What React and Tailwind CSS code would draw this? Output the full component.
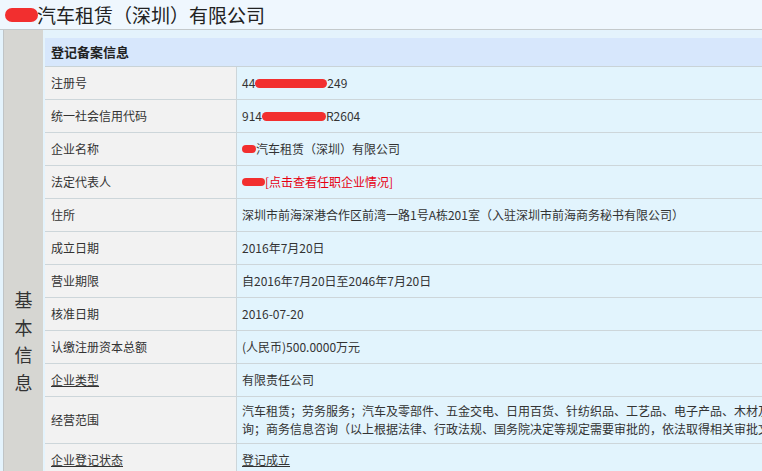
const ROWS = [
  { label: '注册号', value: 'reg' },
  { label: '统一社会信用代码', value: 'credit' },
  { label: '企业名称', value: 'name' },
  { label: '法定代表人', value: 'legal' },
  { label: '住所', value: '深圳市前海深港合作区前湾一路1号A栋201室（入驻深圳市前海商务秘书有限公司）' },
  { label: '成立日期', value: '2016年7月20日' },
  { label: '营业期限', value: '自2016年7月20日至2046年7月20日' },
  { label: '核准日期', value: '2016-07-20' },
  { label: '认缴注册资本总额', value: '(人民币)500.0000万元' },
  { label: '企业类型', value: '有限责任公司', link: true },
  { label: '经营范围', value: 'scope', tall: true },
  { label: '企业登记状态', value: '登记成立', link: true, valueLink: true },
];

const Blob = ({ w, h = 'h-[9px]', className = '' }) => (
  <span className={`inline-block align-middle rounded-full bg-[#f22f2f] ${h} ${className}`} style={{ width: w }} />
);

const Value = ({ row }) => {
  switch (row.value) {
    case 'reg':
      return (
        <span className="flex items-center">
          44<Blob w={72} />249
        </span>
      );
    case 'credit':
      return (
        <span className="flex items-center">
          914<Blob w={64} />R2604
        </span>
      );
    case 'name':
      return (
        <span className="flex items-center">
          <Blob w={14} h="h-[8px]" />汽车租赁（深圳）有限公司
        </span>
      );
    case 'legal':
      return (
        <span className="flex items-center">
          <Blob w={23} h="h-[8px]" />
          <span className="text-[#e60012]">[点击查看任职企业情况]</span>
        </span>
      );
    case 'scope':
      return (
        <span className="whitespace-nowrap leading-[18px]">
          汽车租赁；劳务服务；汽车及零部件、五金交电、日用百货、针纺织品、工艺品、电子产品、木材及制品的销售；经济信息咨
          <br />
          询；商务信息咨询（以上根据法律、行政法规、国务院决定等规定需要审批的，依法取得相关审批文件后方可经营）
        </span>
      );
    default:
      return <span className={row.valueLink ? 'underline' : ''}>{row.value}</span>;
  }
};

export default function App() {
  return (
    <div
      className="w-[762px] h-[471px] overflow-hidden bg-[#eff7fe] text-[#333]"
      style={{ fontFamily: '"Noto Sans CJK SC", "Noto Sans", sans-serif' }}
    >
      {/* company title */}
      <div className="h-[29px] pl-[5px] flex items-center text-[19px] text-[#222] leading-none">
        <Blob w={33} h="h-[14px]" className="-mr-[1px]" />
        汽车租赁（深圳）有限公司
      </div>

      <div className="flex border-t border-[#c4c9cb] bg-[#e4f3fc] pl-[3px] min-w-[920px]">
        {/* side label */}
        <div className="w-[40px] shrink-0 border-l border-[#bfc4c6] bg-[#d6d6d2] pt-[256px] flex flex-col items-center text-[18px] leading-[27.5px] text-[#333]">
          <span>基</span>
          <span>本</span>
          <span>信</span>
          <span>息</span>
        </div>

        <div className="flex-1 pl-[2px] pt-[8px]">
          <div className="h-[29px] bg-[#d7e7fc] border-b border-[#c9d3d7] pl-[6px] flex items-center text-[13px] font-bold text-[#222]">
            登记备案信息
          </div>

          {ROWS.map((row) => (
            <div
              key={row.label}
              className={`flex border-b border-[#cdd6da] text-[12px] ${row.tall ? 'h-[47px]' : 'h-[33px]'}`}
            >
              <div className="w-[192px] shrink-0 bg-[#f2f2f2] border-r border-[#cdd6da] pl-[6px] flex items-center">
                <span className={row.link ? 'underline' : ''}>{row.label}</span>
              </div>
              <div className="flex-1 bg-[#e2f4fd] pl-[5px] flex items-center overflow-hidden">
                <Value row={row} />
              </div>
            </div>
          ))}
        </div>
      </div>
    </div>
  );
}
